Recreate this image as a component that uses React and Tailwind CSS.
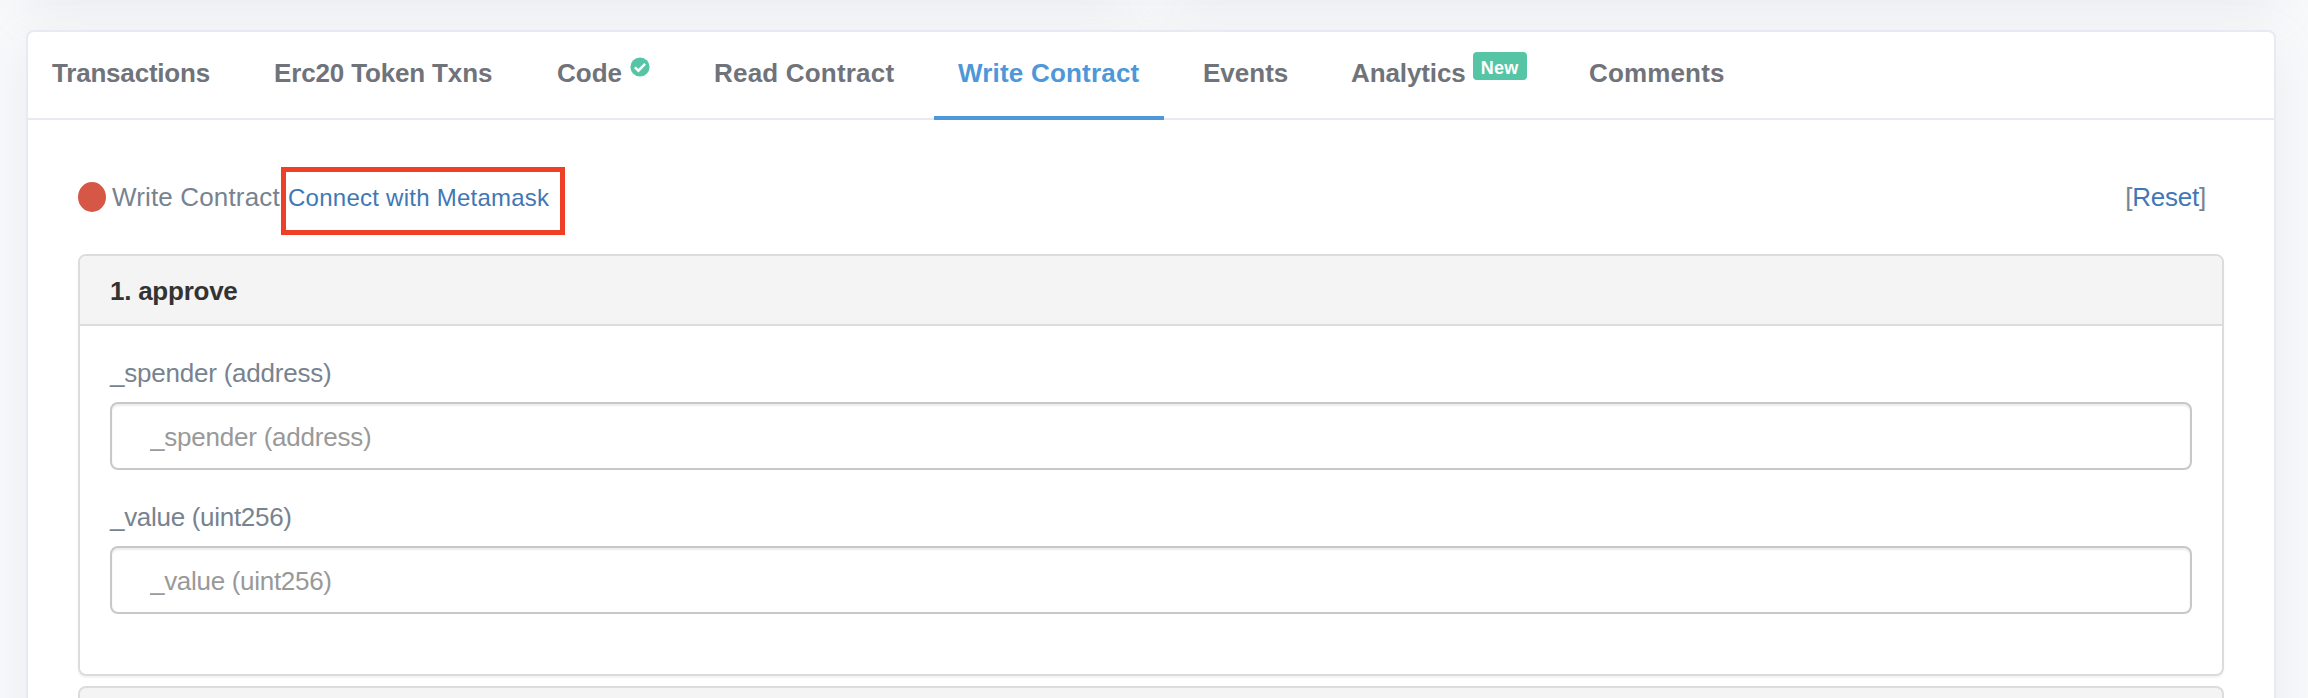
const tabs = [
  { label: 'Transactions', width: 'w-[208px]', tracking: 'tracking-[-0.2px]' },
  { label: 'Erc20 Token Txns', width: 'w-[269px]', tracking: 'tracking-[-0.15px]' },
  { label: 'Code', width: 'w-[143px]', tracking: 'tracking-[0px]', verified: true },
  { label: 'Read Contract', width: 'w-[230px]', tracking: 'tracking-[0.2px]' },
  { label: 'Write Contract', width: 'w-[230px]', tracking: 'tracking-[0.2px]', active: true },
  { label: 'Events', width: 'w-[134px]', tracking: 'tracking-[0px]', offset: 'ml-[1px]' },
  { label: 'Analytics', width: 'w-[224px]', tracking: 'tracking-[-0.1px]', badge: 'New' },
  { label: 'Comments', width: 'w-[186px]', tracking: 'tracking-[0.15px]' },
];

function VerifiedIcon() {
  return (
    <svg viewBox="0 0 20 20" className="mt-[25px] ml-[8px] size-[20px] shrink-0">
      <circle cx="10" cy="10" r="9.6" fill="#56c5a5" />
      <path d="M4.9 10.4 8.4 13.7 15.1 6.9" fill="none" stroke="#fff" strokeWidth="2.5" />
    </svg>
  );
}

function Tab({ label, width, tracking, offset = '', active, verified, badge }) {
  return (
    <a
      className={`${width} ${tracking} ${offset} ${
        active ? 'border-[#4e97d8] text-[#4e97d8]' : 'border-transparent text-[#707379]'
      } flex h-[88px] shrink-0 items-start border-b-4 px-[24px] text-[26px] leading-[30px] font-bold whitespace-nowrap`}
    >
      <span className="mt-[26px]">{label}</span>
      {verified && <VerifiedIcon />}
      {badge && (
        <span className="mt-[20px] ml-[7px] flex h-[28px] w-[54px] shrink-0 items-center justify-center rounded-[4px] bg-[#56c5a5] pt-[3px] text-[18px] leading-[20px] tracking-[0.3px] text-white">
          {badge}
        </span>
      )}
    </a>
  );
}

function Field({ label, tracking }) {
  return (
    <label className={`${tracking} block h-[144px] text-[26px] leading-[30px] text-[#77838f]`}>
      <span className="block h-[44px]">{label}</span>
      <input
        placeholder={label}
        className="block h-[68px] w-full rounded-[8px] border-2 border-[#c8c8c8] bg-white px-[38px] pt-[3px] shadow-[inset_0_2px_2px_rgba(0,0,0,0.075)] outline-none placeholder:text-[#999]"
      />
    </label>
  );
}

export default function App() {
  return (
    <div className="h-[698px] w-full overflow-hidden bg-[#f8f9fb] px-[26px] font-['Liberation_Sans',Arial,sans-serif]">
      <div className="-mt-[100px] flex h-[130px] gap-[30px] pr-[6px]">
        <div className="h-[92px] flex-1 shadow-[0_16px_48px_rgba(165,167,172,0.16)]" />
        <div className="h-[92px] flex-1 shadow-[0_16px_48px_rgba(165,167,172,0.16)]" />
      </div>
      <div className="relative mr-[6px] h-[760px] rounded-[8px] border-2 border-[#e7eaf3] bg-white shadow-[0_16px_48px_rgba(165,167,172,0.16)]">
        <nav className="flex h-[88px] gap-[14px] shadow-[inset_0_-2px_0_#e7eaf3]">
          {tabs.map((tab) => (
            <Tab key={tab.label} {...tab} />
          ))}
        </nav>
        <main className="pr-[50px] pl-[50px]">
          <div className="flex h-[134px] items-start text-[26px] leading-[30px] text-[#77838f]">
            <span className="mt-[62px] h-[30px] w-[28px] shrink-0 rounded-[50%] bg-[#d65745]" />
            <span className="mt-[62px] ml-[6px] w-[169px] tracking-[0.15px] whitespace-nowrap">Write Contract</span>
            <a className="mt-[47px] flex h-[68px] w-[284px] items-start border-[5px] border-[#ee4026] pt-[11px] pl-[2px] text-[24px] tracking-[0.25px] whitespace-nowrap text-[#3f78b4]">
              Connect with Metamask
            </a>
            <span className="mt-[62px] mr-[18px] ml-auto tracking-[-0.25px]">
              [<a className="text-[#3f78b4]">Reset</a>]
            </span>
          </div>
          <section className="h-[422px] rounded-[8px] border-2 border-[#dcdcdc] bg-white shadow-[0_2px_2px_rgba(0,0,0,0.05)]">
            <h2 className="h-[70px] rounded-t-[6px] border-b-2 border-[#dcdcdc] bg-[#f4f4f4] pt-[20px] pl-[30px] text-[26px] leading-[30px] font-bold tracking-[-0.25px] text-[#333]">
              1. approve
            </h2>
            <div className="px-[30px] pt-[32px]">
              <Field label="_spender (address)" tracking="tracking-[-0.22px]" />
              <Field label="_value (uint256)" tracking="tracking-[-0.3px]" />
            </div>
          </section>
          <section className="mt-[10px] h-[70px] rounded-t-[8px] border-2 border-[#dcdcdc] bg-[#f4f4f4]" />
        </main>
      </div>
    </div>
  );
}
